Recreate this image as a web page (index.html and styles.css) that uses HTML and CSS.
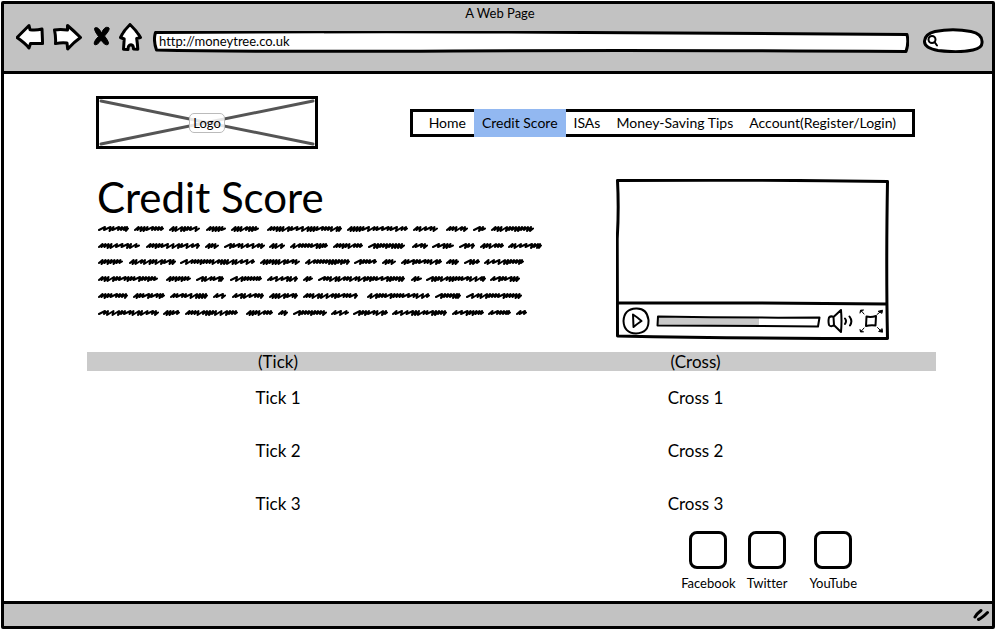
FILE: index.html
```html
<!DOCTYPE html>
<html lang="en">
<head>
<meta charset="utf-8">
<title>A Web Page</title>
<link rel="stylesheet" href="styles.css">
</head>
<body>
<div class="window">
  <header class="chrome">
    <div class="title">A Web Page</div>
    <div class="toolbar">
      <div class="tools">
        <button class="tool" aria-label="Back"><svg width="28" height="28" viewBox="16 23 28 28"><path d="M17 37.5 29 25.5 30 29.7Q36 30.5 42 29L42.6 43.5 30.5 43.6 29 48Q25 43 17 37.5Z"/></svg></button>
        <button class="tool" aria-label="Forward"><svg width="30" height="28" viewBox="53 23 30 28"><path d="M54.5 30Q60 29 67.500 30L67.500 25.500Q74 31 80.500 37.500Q74 42 67.700 49L67 43Q61 42.500 55.500 43.600Q56 37 54.500 30Z"/></svg></button>
        <button class="tool" aria-label="Stop"><svg width="18" height="28" viewBox="92 23 18 28"><path class="solid" d="M95 28Q98 26 101.500 33Q104.500 26 108.500 27.500Q111 29 104.500 36Q110 43 108 44.500Q105 46 101 40Q97 46 94.500 44.500Q93 42 98.500 36.500Q93 29 95 28Z"/></svg></button>
        <button class="tool" aria-label="Home"><svg width="24" height="28" viewBox="119 23 24 28"><path d="M130 24.500Q136 30 140.500 37.500L136.700 38.500Q137.500 44 137.800 49.300L133.500 49Q133.500 45 131 44.800Q128 45 128 49.500L123.500 49.300 124.200 39 120.500 37.500Q124 30 130 24.500Z"/></svg></button>
      </div>
      <div class="url">
        <svg class="frame" viewBox="0 0 755 22" preserveAspectRatio="none"><path d="M2.500 1.500Q250 0 430 1.500T753 3.500Q755 12 752 20.500Q500 19 300 20T3.500 19Q0 9 2.500 1.500Z"/></svg>
        <input type="text" aria-label="Address" value="http://moneytree.co.uk">
      </div>
      <label class="search">
        <svg class="frame" viewBox="0 0 61 25" preserveAspectRatio="none"><path d="M12 3.500Q30 0 48 3.500Q60 6 59 15Q59 20 50 22Q36 25 15 22.500Q1 20 1.500 13Q2 6 12 3.500Z"/></svg>
        <svg class="glass" width="12" height="12" viewBox="0 0 12 12"><circle cx="5" cy="4.500" r="3.500"/><path d="M7.500 7 10 10.500"/></svg>
        <input type="search" aria-label="Search">
      </label>
    </div>
  </header>

  <main class="page">
    <div class="masthead">
      <a class="logo" href="#">
        <svg viewBox="0 0 216 47" preserveAspectRatio="none"><path d="M2 2 214 45M2 45 214 2"/></svg>
        <span>Logo</span>
      </a>
      <nav class="nav">
        <a href="#">Home</a>
        <a href="#" class="current" aria-current="page">Credit Score</a>
        <a href="#">ISAs</a>
        <a href="#">Money-Saving Tips</a>
        <a href="#">Account(Register/Login)</a>
      </nav>
    </div>

    <section class="intro">
      <div class="copy">
        <h1>Credit Score</h1>
        <svg class="scribble" width="448" height="100" viewBox="97 222 448 100" role="img" aria-label="Introduction"><path id="scribble"/></svg>
      </div>
      <div class="video">
        <svg class="frame" viewBox="0 0 273 161" preserveAspectRatio="none"><path d="M1.500 1.500Q140 .5 271.500 2.500Q270 90 271.500 159.500Q130 159.500 1.500 157Q1.500 110 1.200 60Q3 30 1.500 1.500ZM2 124Q140 123.500 271 125"/></svg>
        <div class="screen"></div>
        <div class="controls">
          <button class="tool" aria-label="Play"><svg class="fine" width="28" height="28" viewBox="0 0 28 28"><path d="M14 1.500Q25 1 26.500 13Q27 26 14 26.500Q2 26 1.500 14Q2 2 14 1.500Z"/><path d="M11 7.500Q15 10 19.500 14Q15 17 11.500 20Z"/></svg></button>
          <div class="track">
            <svg class="frame" viewBox="0 0 165 13" preserveAspectRatio="none"><path class="played" d="M2 1.500 103 2.500V10.500L1.500 10.500Z"/><path class="line" d="M2 1.500Q80 3 163.500 2.500L162 11.500Q80 10.500 1.500 10.500Z"/></svg>
            <input type="range" aria-label="Seek" min="0" max="100" value="63">
          </div>
          <button class="tool" aria-label="Volume"><svg class="fine" width="26" height="24" viewBox="0 0 26 24"><path d="M2 8.500Q4 6.500 6.500 8L7 16Q4 18.500 2 16Q1 12 2 8.500ZM6.500 8 14 1Q15 12 14 23L6.800 16"/><path d="M18 9.500Q20 12 18 15M22.500 7.500Q26 12 23 16.500"/></svg></button>
          <button class="tool" aria-label="Full screen"><svg class="fine" width="25" height="24" viewBox="0 0 25 24"><path d="M7.500 7.500Q12 8.500 17 7L16.500 16.500Q11 16 7 17Z"/><path class="thin" d="M5 5 2 1.500M1 4 1.500 1.200 4.500 1M18 5.500 22.500 2M19.500 2.200 23.500 1.200 23 4ZM5 19 2 22.500M1 20.500 1.500 23 4.500 22.800M18.500 18.500 22.500 22.500M20 22.500 23.500 23.200 23.200 20Z"/></svg></button>
        </div>
      </div>
    </section>

    <table class="compare">
      <colgroup><col class="ticks"><col></colgroup>
      <thead><tr><th>(Tick)</th><th>(Cross)</th></tr></thead>
      <tbody>
        <tr><td>Tick 1</td><td>Cross 1</td></tr>
        <tr><td>Tick 2</td><td>Cross 2</td></tr>
        <tr><td>Tick 3</td><td>Cross 3</td></tr>
      </tbody>
    </table>

    <div class="social">
      <a href="#"><i></i>Facebook</a>
      <a href="#"><i></i>Twitter</a>
      <a href="#"><i></i>YouTube</a>
    </div>
  </main>

  <footer class="status">
    <svg width="17" height="14" viewBox="0 0 17 14"><path d="M2 9Q4 5.500 8 2.500M5.500 11.500Q9 10 14.500 4.500"/></svg>
  </footer>
</div>
<script src="scribble.js"></script>
</body>
</html>
```
FILE: scribble.js
```js
// Each line: baseline, then start/end pairs for every scribbled word.
const lines = [
  [229, 98,129, 134,164, 169,200, 206,226, 231,259, 267,342, 347,408, 413,438, 446,468, 473,486, 491,534],
  [246, 98,140, 146,200, 205,219, 224,265, 269,285, 290,328, 333,363, 368,405, 412,428, 432,454, 459,475, 480,504, 508,542],
  [262, 98,123, 129,176, 180,255, 260,300, 305,350, 354,377, 382,396, 401,442, 446,459, 464,480, 484,524],
  [279, 98,158, 166,191, 196,224, 230,262, 267,298, 303,313, 318,405, 411,422, 426,486, 490,520],
  [296, 98,128, 133,165, 170,208, 213,226, 232,264, 269,298, 303,358, 367,430, 435,461, 466,522],
  [313, 98,159, 163,180, 185,238, 246,273, 278,288, 293,327, 331,349, 353,388, 392,447, 452,484, 488,511, 516,527]
];

let seed = 7;
function random() {
  seed = (seed * 16807) % 2147483647;
  return seed / 2147483647;
}

let d = "";
for (const [y, ...ends] of lines) {
  for (let i = 0; i < ends.length; i += 2) {
    const stop = ends[i + 1] - 1;
    let x = ends[i] + 1;
    d += `M${x} ${y + 1}`;
    while (x < stop - 3) {
      const wide = random() < 0.35;
      const top = Math.min(x + (wide ? 6 : 3.5), stop - 1);
      d += `L${top} ${y - 2}L${top - 1} ${y + (random() < 0.5 ? 2 : 1)}`;
      x = top - 0.5;
    }
    d += `L${stop} ${y - 0.5}`;
  }
}
document.getElementById("scribble").setAttribute("d", d);
```
FILE: styles.css
```css
* { box-sizing: border-box; }

body {
  margin: 0;
  background: #fff;
  color: #000;
  font: 13px/18px Lato, "Liberation Sans", sans-serif;
  font-variant-ligatures: none;
}

a { color: inherit; text-decoration: none; }

input, button { font: inherit; color: inherit; }

svg {
  display: block;
  fill: none;
  stroke: #000;
  stroke-width: 3;
  stroke-linecap: round;
  stroke-linejoin: round;
}

/* Hand-drawn outline stretched behind a box */
.frame {
  position: absolute;
  inset: 0;
  width: 100%;
  height: 100%;
  fill: #fff;
}
.frame path { vector-effect: non-scaling-stroke; }

.window {
  display: flex;
  flex-direction: column;
  min-height: calc(100vh - 3px);
  margin: 1px 1px 2px;
  border: 3px solid #000;
  border-radius: 2px;
}

/* Browser chrome */
.chrome {
  padding: 0 8px 18px 12px;
  background: #c2c2c2;
  border-bottom: 3px solid #000;
}

.title { text-align: center; }

.toolbar { display: flex; align-items: flex-end; padding-top: 1px; }

.tools { display: flex; gap: 9px; padding-bottom: 2px; margin-right: 10px; }

.tool { padding: 0; border: 0; background: none; }
.tool path { fill: #fff; }
.tool .solid { fill: #000; stroke-width: 1; }

.url {
  position: relative;
  flex: 1;
  height: 22px;
  margin-right: 14px;
}
.url input {
  position: relative;
  display: block;
  width: 100%;
  height: 20px;
  padding: 0 6px;
  border: 0;
  background: none;
}

.search {
  position: relative;
  display: flex;
  align-items: center;
  width: 61px;
  height: 25px;
  padding-left: 4px;
}
.search .glass { position: relative; flex: none; stroke-width: 2; }
.search input {
  position: relative;
  width: 36px;
  padding: 0;
  border: 0;
  background: none;
}

/* Page */
.page { flex: 1; padding: 22px 56px 0 83px; }

.masthead {
  display: flex;
  align-items: center;
  justify-content: space-between;
  padding: 0 21px 0 9px;
}

.logo {
  position: relative;
  display: grid;
  place-items: center;
  width: 222px;
  height: 53px;
  border: 3px solid #000;
}
.logo svg {
  position: absolute;
  inset: 0;
  width: 100%;
  height: 100%;
  stroke: #555;
}
.logo span {
  position: relative;
  padding: 0 3px;
  border: 1px solid #bbb;
  border-radius: 5px;
  background: rgba(255, 255, 255, 0.85);
}

.nav {
  display: flex;
  padding: 0 8px;
  border: solid #000;
  border-width: 0 3px;
  background: linear-gradient(#000, #000) 0 0 / 100% 3px no-repeat,
    linear-gradient(#000, #000) 0 100% / 100% 3px no-repeat;
  font-size: 14px;
}
.nav a { padding: 0 8px; line-height: 28px; }
.nav .current { background: #92b8f1; }

.intro {
  display: flex;
  justify-content: space-between;
  padding: 30px 47px 0 10px;
}

h1 { margin: 0 0 7px; font-size: 42px; font-weight: 400; line-height: 36px; }
.scribble { stroke-width: 2; }

.video {
  position: relative;
  display: flex;
  flex-direction: column;
  width: 273px;
  height: 161px;
}
.screen { flex: 1; }
.controls {
  position: relative;
  display: flex;
  align-items: center;
  gap: 6px;
  height: 38px;
  padding: 0 5px 0 6px;
}
.fine { stroke-width: 2; }
.tool .thin { stroke-width: 1; fill: #000; }
.track { position: relative; flex: 1; height: 13px; }
.track .frame { stroke-width: 2; }
.track .line { fill: none; }
.track .played { fill: #c9c9c9; stroke: none; }
.track input {
  position: relative;
  display: block;
  width: 100%;
  height: 13px;
  margin: 0;
  appearance: none;
  background: none;
}
.track input::-webkit-slider-thumb { appearance: none; width: 0; height: 0; }

.compare {
  width: 100%;
  margin-top: 12px;
  border-collapse: collapse;
  table-layout: fixed;
  font-size: 17px;
  line-height: 19px;
  text-align: center;
}
.compare .ticks { width: 45%; }
.compare th { padding: 0; background: #cacaca; font-weight: 400; }
.compare td { height: 53px; padding: 0; }
.compare th + th, .compare td + td { padding-right: 14px; }

.social {
  display: flex;
  justify-content: flex-end;
  gap: 11px;
  padding: 1px 79px 9px 0;
}
.social a { display: grid; justify-items: center; gap: 5px; }
.social a:last-child { margin-left: 11px; }
.social i {
  width: 38px;
  height: 38px;
  border: 3px solid #000;
  border-radius: 8px;
}

.status {
  display: flex;
  align-items: center;
  justify-content: flex-end;
  height: 25px;
  padding-right: 2px;
  border-top: 3px solid #000;
  background: #c2c2c2;
}
```
